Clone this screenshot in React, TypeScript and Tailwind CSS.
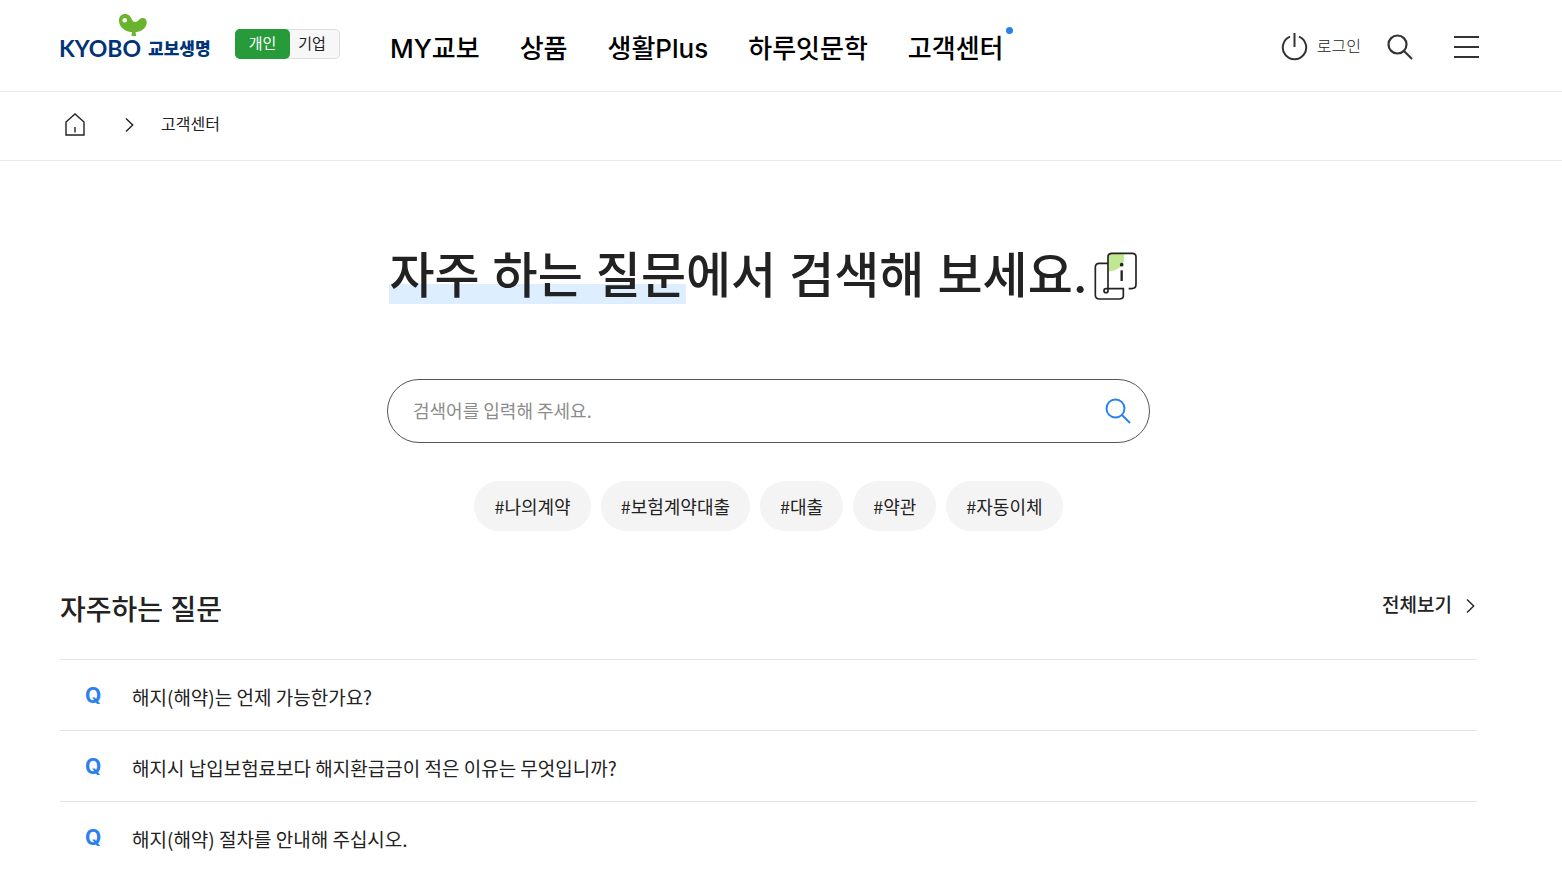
const menus = ['MY교보', '상품', '생활Plus', '하루잇문학', '고객센터'];

const tags = ['#나의계약', '#보험계약대출', '#대출', '#약관', '#자동이체'];

const questions = [
  '해지(해약)는 언제 가능한가요?',
  '해지시 납입보험료보다 해지환급금이 적은 이유는 무엇입니까?',
  '해지(해약) 절차를 안내해 주십시오.',
];

function Logo() {
  return (
    <a href="#" aria-label="KYOBO 교보생명" className="flex shrink-0">
      <svg width="153" height="48" viewBox="0 0 153 48" fill="#003478">
        <path
          d="M59 7.500C59 3.500 61.500 1 65 1c3.800 0 5.500 2.500 6.600 5 1.300 3 3.600 3.800 6 2 1.700-1.300 2.500-3 5-3 2.700 0 4.300 2 4.100 4.800-.4 5-4.500 8.800-11.200 9.500l.6 3.700h-4.600l.6-3.700C64 18.500 59 13.500 59 7.500z"
          fill="#6ab42d"
        />
        <circle cx="64.700" cy="7.300" r="2.300" fill="#fff" />
        <text x="-1" y="44" fontSize="23" fontWeight="700" fontFamily="Lato, sans-serif">KYOBO</text>
        <text x="88" y="42" fontSize="17" fontWeight="900" fontFamily="'Noto Sans CJK KR', sans-serif">교보생명</text>
      </svg>
    </a>
  );
}

function SearchIcon({ className }: { className: string }) {
  return (
    <svg width="28" height="28" viewBox="0 0 28 28" fill="none" stroke="currentColor" className={className}>
      <circle cx="11.500" cy="11.500" r="9" />
      <path d="M18 18l8 8" />
    </svg>
  );
}

function Chevron() {
  return (
    <svg width="9" height="16" viewBox="0 0 9 16" fill="none" stroke="#222" strokeWidth="1.400">
      <path d="M1 1.500L7.700 8 1 14.500" />
    </svg>
  );
}

function GuideIcon() {
  return (
    <svg width="44" height="50" viewBox="0 0 132 150" fill="none" stroke="#222" strokeWidth="5">
      <path d="M44 8h46v14c0 22-20 39-46 39z" fill="#bfe88f" stroke="none" />
      <path d="M42 37H16Q4 37 4 49v83q0 12 12 12h60q12 0 12-9v-22H36a6 6 0 1 0 6 6V18Q42 7 53 7h62q11 0 11 11v82q0 13-13 13h-9" />
      <circle cx="83" cy="41" r="5.500" fill="#222" stroke="none" />
      <path d="M83 58v32" strokeWidth="7" />
    </svg>
  );
}

function Header() {
  return (
    <header className="flex h-[92px] items-start border-b border-[#e9e9e9] pl-[60px] pr-[82px]">
      <div className="flex pt-[13px]">
        <Logo />
      </div>
      <div className="mt-[29px] ml-[22px] flex h-[30px] shrink-0 rounded-[5px] border border-[#ddd] bg-[#f7f7f7] text-[15px] leading-[26px]">
        <button className="-m-px w-[55px] rounded-[5px] bg-[#279b3a] text-white">개인</button>
        <button className="w-[50px] pr-1 text-[#222]">기업</button>
      </div>
      <nav className="ml-[50px] flex gap-[40px] pt-[29px] text-[26px] leading-[40px] font-medium whitespace-nowrap text-black">
        {menus.map((menu) => (
          <a key={menu} href="#" className="relative">
            {menu}
            {menu === '고객센터' && (
              <span className="absolute -top-[2px] -right-[9px] size-[7px] rounded-full bg-[#2b80ee]" />
            )}
          </a>
        ))}
      </nav>
      <div className="ml-auto flex h-[94px] items-center">
        <button className="flex items-center gap-2 text-[16px] whitespace-nowrap text-[#222]">
          <svg width="28" height="28" viewBox="0 0 28 28" fill="none" stroke="#333" strokeWidth="2">
            <path d="M9 3.700a11.700 11.700 0 1 0 9 0M13.500 0v14" />
          </svg>
          <span className="pb-[3px] font-light">로그인</span>
        </button>
        <button aria-label="검색" className="ml-[25px]">
          <SearchIcon className="stroke-[2.200] text-[#333]" />
        </button>
        <button aria-label="전체메뉴" className="ml-[39px]">
          <svg width="27" height="24" viewBox="0 0 27 24" fill="none" stroke="#333" strokeWidth="2">
            <path d="M1 2h25M1 12h25M1 22h25" />
          </svg>
        </button>
      </div>
    </header>
  );
}

function Breadcrumb() {
  return (
    <div className="flex h-[69px] items-center border-b border-[#e9e9e9] pb-[3px] pl-[65px]">
      <a href="#" aria-label="홈">
        <svg width="20" height="23" viewBox="0 0 20 23" fill="none" stroke="#222" strokeWidth="1.400">
          <path d="M1 9L10 1l9 8v13H1zM10 14v5.500" />
        </svg>
      </a>
      <span className="ml-[40px]">
        <Chevron />
      </span>
      <a href="#" className="ml-[27px] pb-[2px] text-[16px] text-[#222]">고객센터</a>
    </div>
  );
}

export default function App() {
  return (
    <div className="min-h-screen bg-white font-['Inter','Noto_Sans_CJK_KR',sans-serif] text-[#222]">
      <Header />
      <Breadcrumb />
      <main className="pr-[85px] pl-[60px]">
        <section className="flex flex-col items-center pt-[83px]">
          <h1 className="flex items-end text-[49px] leading-[56px] font-medium whitespace-nowrap">
            <span className="bg-[linear-gradient(#dceeff,#dceeff)] bg-size-[100%_20px] bg-bottom bg-no-repeat pt-1">
              자주 하는 질문
            </span>
            <span className="pt-1">에서 검색해 보세요.</span>
            <span className="mr-[10px] mb-[3px] ml-[6px]">
              <GuideIcon />
            </span>
          </h1>

          <form className="mt-[75px] flex h-16 w-full max-w-[763px] items-center rounded-full border border-[#555] pr-[17px] pl-[25px]">
            <input
              type="text"
              aria-label="검색어"
              placeholder="검색어를 입력해 주세요."
              className="min-w-0 flex-1 pb-[2px] font-['Noto_Sans_CJK_KR',sans-serif] text-[18px] outline-none placeholder:text-[#8c8c8c]"
            />
            <button type="button" aria-label="검색">
              <SearchIcon className="stroke-2 text-[#2b80ee]" />
            </button>
          </form>

          <div className="mt-[38px] flex gap-[10px] font-['Noto_Sans_CJK_KR',sans-serif]">
            {tags.map((tag) => (
              <a key={tag} href="#" className="h-[50px] rounded-full bg-[#f4f4f4] px-5 text-[18px] leading-[50px] whitespace-nowrap">
                {tag}
              </a>
            ))}
          </div>
        </section>

        <section className="mt-[58px]">
          <div className="mb-[28px] flex items-start justify-between">
            <h2 className="text-[28px] leading-[42px] font-medium">자주하는 질문</h2>
            <a href="#" className="flex items-center gap-[14px] pr-[2px] text-[19px] leading-[34px] font-medium">
              전체보기
              <Chevron />
            </a>
          </div>
          <ul>
            {questions.map((question) => (
              <li key={question} className="border-t border-[#e4e4e4]">
                <a href="#" className="flex h-[70px] items-center pt-1 pl-[25px]">
                  <span className="w-[47px] pb-[2px] text-[21px] font-bold text-[#2b80ee]">Q</span>
                  <span className="font-['Noto_Sans_CJK_KR',sans-serif] text-[19px]">{question}</span>
                </a>
              </li>
            ))}
          </ul>
        </section>
      </main>
    </div>
  );
}
